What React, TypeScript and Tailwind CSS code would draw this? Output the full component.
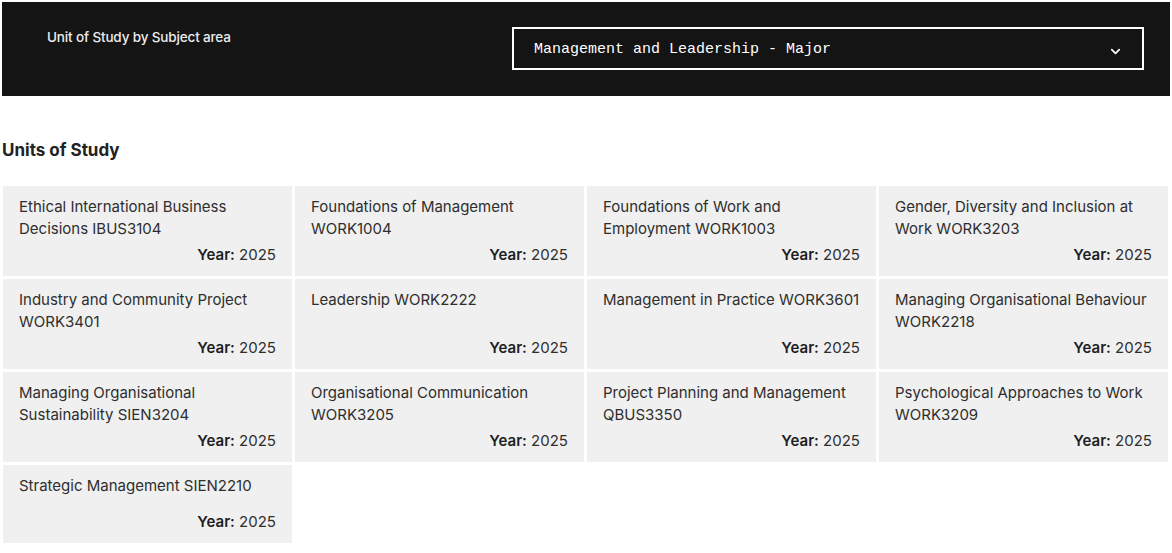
import { ChevronDown } from "lucide-react";

const units = [
  "Ethical International Business Decisions IBUS3104",
  "Foundations of Management WORK1004",
  "Foundations of Work and Employment WORK1003",
  "Gender, Diversity and Inclusion at Work WORK3203",
  "Industry and Community Project WORK3401",
  "Leadership WORK2222",
  "Management in Practice WORK3601",
  "Managing Organisational Behaviour WORK2218",
  "Managing Organisational Sustainability SIEN3204",
  "Organisational Communication WORK3205",
  "Project Planning and Management QBUS3350",
  "Psychological Approaches to Work WORK3209",
  "Strategic Management SIEN2210",
];

const App = () => {
  return (
    <div className="min-h-screen bg-white p-[2px] font-['Inter',sans-serif] text-[#2a2a2a]">
      {/* Subject area filter */}
      <section className="flex h-[94px] w-[1168px] items-start bg-[#141414] pl-[45px] pr-[24px] pt-[25px]">
        <label className="w-[465px] text-[13.5px] font-medium tracking-[-0.15px] text-[#ececec]">
          Unit of Study by Subject area
        </label>
        <button className="flex h-[43px] w-[632px] items-center justify-between border-2 border-white pl-[20px] pr-[19px] pt-[3px] font-['Liberation_Mono',monospace] text-[15px] text-white">
          <span>Management and Leadership - Major</span>
          <ChevronDown className="mt-[2px] h-[15px] w-[15px]" strokeWidth={2.75} />
        </button>
      </section>

      <h2 className="mt-[42px] text-[17px] font-bold text-[#222]">Units of Study</h2>

      <div className="ml-[1px] mt-[22px] grid w-[1165px] grid-cols-4 gap-[3px]">
        {units.map((unit) => (
          <div key={unit} className="flex min-h-[78px] flex-col bg-[#f0f0f0] px-[16px] pb-[10px] pt-[10px]">
            <p className="text-[15px] leading-[22px] text-[#2e2e2e]">{unit}</p>
            <p className="mt-auto pt-[4px] text-right text-[15px] leading-[22px] text-[#2e2e2e]">
              <span className="font-semibold text-[#1e1e1e]">Year:</span> 2025
            </p>
          </div>
        ))}
      </div>
    </div>
  );
};

export default App;
